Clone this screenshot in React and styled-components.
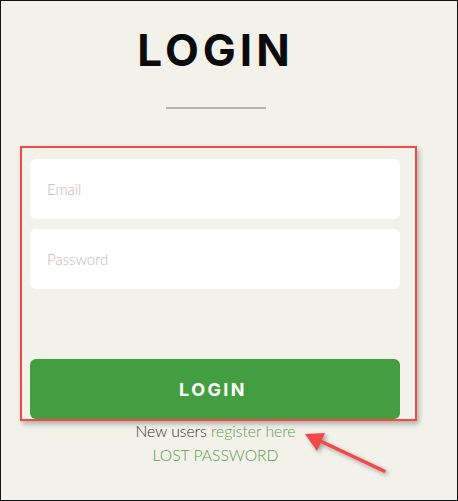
import React from 'react';
import styled, { createGlobalStyle } from 'styled-components';

const GlobalStyle = createGlobalStyle`
  html, body {
    margin: 0;
    padding: 0;
    background: #f2f1ea;
  }
  * {
    box-sizing: border-box;
  }
`;

const Frame = styled.div`
  position: relative;
  width: 458px;
  height: 501px;
  border: 1px solid #111;
  background: #f2f1ea;
  font-family: 'Lato', 'Open Sans', sans-serif;
  overflow: hidden;
`;

const Column = styled.div`
  width: 429px;
`;

const Title = styled.h1`
  margin: 0;
  padding-top: 23px;
  text-align: center;
  font-family: 'Inter', 'Noto Sans', sans-serif;
  font-size: 44px;
  font-weight: 700;
  line-height: 52px;
  letter-spacing: 4px;
  color: #0b0b0b;
`;

const Divider = styled.div`
  width: 100px;
  height: 2px;
  margin: 31px auto 0;
  background: #b5b5b3;
`;

const FormBox = styled.form`
  display: flex;
  flex-direction: column;
  width: 397px;
  margin: 37px 0 0 19px;
  padding: 11px 15px 0 8px;
  border: 2px solid #f24848;
  box-shadow: 2px 3px 5px rgba(0, 0, 0, 0.28);
`;

const Field = styled.input`
  height: 60px;
  width: 100%;
  border: none;
  border-radius: 6px;
  background: #fff;
  padding: 0 17px;
  margin-bottom: 10px;
  font-family: 'Lato', sans-serif;
  font-size: 15px;
  font-weight: 300;
  color: #333;
  outline: none;

  &::placeholder {
    color: #c4b8b6;
  }
`;

const SubmitButton = styled.button`
  height: 60px;
  width: 100%;
  margin-top: 60px;
  border: none;
  border-radius: 6px;
  background: #439e42;
  color: #fff;
  font-family: 'Inter', 'Noto Sans', sans-serif;
  font-size: 18px;
  font-weight: 700;
  letter-spacing: 2.4px;
  padding-left: 2px;
  cursor: pointer;
`;

const Links = styled.div`
  display: flex;
  flex-direction: column;
  align-items: center;
  margin-top: -2px;
  font-size: 15.7px;
  font-weight: 300;
  line-height: 24px;
  color: #333;
`;

const GreenLink = styled.a`
  color: #5b9d55;
  text-decoration: none;
`;

const Arrow = styled.svg`
  position: absolute;
  left: 295px;
  top: 422px;
  filter: drop-shadow(2px 2px 2px rgba(0, 0, 0, 0.35));
`;

export default function App() {
  return (
    <>
      <GlobalStyle />
      <Frame>
        <Column>
          <Title>LOGIN</Title>
          <Divider />
          <FormBox onSubmit={(e) => e.preventDefault()}>
            <Field type="email" placeholder="Email" />
            <Field type="password" placeholder="Password" />
            <SubmitButton type="submit">LOGIN</SubmitButton>
          </FormBox>
          <Links>
            <div>
              New users <GreenLink href="#">register here</GreenLink>
            </div>
            <GreenLink href="#">LOST PASSWORD</GreenLink>
          </Links>
        </Column>
        <Arrow width="100" height="60" viewBox="0 0 100 60">
          <line x1="88" y1="48" x2="20" y2="16" stroke="#f24848" strokeWidth="3.5" strokeLinecap="round" />
          <polygon points="9,11 29,10 21,28" fill="#f24848" />
        </Arrow>
      </Frame>
    </>
  );
}
